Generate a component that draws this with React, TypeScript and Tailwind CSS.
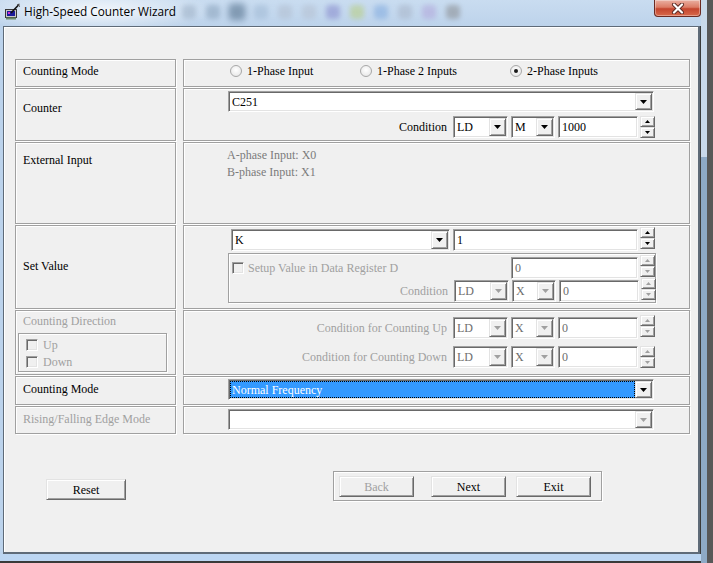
import React from "react";

const sunken =
  "border border-t-[#a0a0a0] border-l-[#a0a0a0] border-r-white border-b-white shadow-[inset_1px_1px_0_#696969,inset_-1px_-1px_0_#e3e3e3]";
const raised =
  "bg-[#f0f0f0] border border-t-[#e3e3e3] border-l-[#e3e3e3] border-r-[#696969] border-b-[#696969] shadow-[inset_1px_1px_0_#fff,inset_-1px_-1px_0_#a0a0a0]";
const etched = "border border-[#a0a0a0] shadow-[inset_1px_1px_0_#fff,1px_1px_0_#fff]";

function Tri({ up, off, small }: { up?: boolean; off?: boolean; small?: boolean }) {
  const w = small ? 5 : 7;
  const h = small ? 3 : 4;
  return (
    <svg width={w} height={h} viewBox={`0 0 ${w} ${h}`} className="block">
      <path d={up ? `M${w / 2} 0L${w} ${h}H0Z` : `M0 0H${w}L${w / 2} ${h}Z`} fill={off ? "#a0a0a0" : "#000"} />
    </svg>
  );
}

function Combo({ className, text, off, sel }: { className: string; text?: string; off?: boolean; sel?: boolean }) {
  return (
    <div className={`${sunken} bg-white flex p-[1px] ${className}`}>
      {sel ? (
        <div className="flex-1 flex items-center bg-[#3399ff] text-white border border-dotted border-black pl-[1px]">
          {text}
        </div>
      ) : (
        <div className={`flex-1 flex items-center pl-[2px] ${off ? "text-[#6d6d6d]" : "text-black"}`}>{text}</div>
      )}
      <div className={`${raised} w-[17px] flex items-center justify-center`}>
        <Tri off={off} />
      </div>
    </div>
  );
}

function Field({ className, text, off }: { className: string; text: string; off?: boolean }) {
  return (
    <div className={`${sunken} bg-white flex items-center pl-[3px] ${off ? "text-[#6d6d6d]" : "text-black"} ${className}`}>
      {text}
    </div>
  );
}

function Spin({ off, lift }: { off?: boolean; lift?: boolean }) {
  return (
    <div className={`w-[15px] h-[22px] ml-[2px] flex flex-col ${lift ? "self-start -mt-[2px]" : ""}`}>
      <div className={`${raised} h-[11px] flex items-center justify-center`}>
        <Tri up small off={off} />
      </div>
      <div className={`${raised} h-[11px] flex items-center justify-center`}>
        <Tri small off={off} />
      </div>
    </div>
  );
}

function Check() {
  return <div className={`${sunken} w-[12px] h-[12px] bg-[#f0f0f0] shrink-0`} />;
}

function Radio({ on }: { on?: boolean }) {
  return (
    <div className="w-[12px] h-[12px] rounded-full border border-[#a8a8a8] bg-[radial-gradient(circle_at_50%_40%,#ffffff,#e2e2e2)] flex items-center justify-center shrink-0">
      {on && <div className="w-[4px] h-[4px] rounded-full bg-[#1a1a1a]" />}
    </div>
  );
}

function Btn({ className, children, off }: { className: string; children: React.ReactNode; off?: boolean }) {
  return (
    <div className={`${raised} h-[21px] flex items-center justify-center ${off ? "text-[#a0a0a0]" : "text-black"} ${className}`}>
      {children}
    </div>
  );
}

function CondRow({ label, b, off, lift, dark }: { label: string; b: string; off?: boolean; lift?: boolean; dark?: boolean }) {
  return (
    <div className="w-[427px] h-[22px] flex items-center justify-end">
      <span className={`mr-[6px] ${dark ? "text-black" : "text-[#a0a0a0]"}`}>{label}</span>
      <Combo off={off} className="w-[55px] h-[22px]" text="LD" />
      <Combo off={off} className="w-[44px] h-[22px] ml-[3px]" text={b} />
      <Field off={off} className="w-[80px] h-[22px] ml-[3px]" text={dark ? "1000" : "0"} />
      <Spin off={off} lift={lift} />
    </div>
  );
}

function AppIcon() {
  return (
    <svg width="17" height="17" viewBox="0 0 17 17" className="shrink-0">
      <rect x="1.5" y="6.5" width="11" height="8" fill="#c8c8c8" stroke="#3a3a3a" />
      <rect x="3" y="8" width="8" height="5" fill="#1c1c9a" />
      <rect x="4" y="9" width="2" height="2" fill="#d02cd0" />
      <rect x="2" y="14.5" width="10" height="2" fill="#6a8a6a" />
      <path d="M7 10L15 1.5" stroke="#111" strokeWidth="1.6" />
      <path d="M13 1L16 4M15 0.5V3" stroke="#555" strokeWidth="0.8" />
    </svg>
  );
}

const blurDots = [
  "#9fb2c8",
  "#8ea6bf",
  "#58748f",
  "#a3bcd6",
  "#b3c0d2",
  "#b6c2d3",
  "#8b8fcf",
  "#b9cf87",
  "#86aee0",
  "#aab7cb",
  "#b2a9dc",
  "#8d9196",
];

function TitleBar() {
  return (
    <div className="h-[26px] flex items-start bg-[radial-gradient(ellipse_120px_22px_at_95px_11px,rgba(255,255,255,0.8),rgba(255,255,255,0)),linear-gradient(180deg,#c9dcf0_0%,#bdd3eb_100%)]">
      <div className="h-[22px] flex items-center pl-[4px]">
        <AppIcon />
        <span className="ml-[3px] font-['Open_Sans','Noto_Sans',sans-serif] text-[11.8px] leading-[14px] text-black">
          High-Speed Counter Wizard
        </span>
      </div>
      <div className="ml-[6px] mt-[5px] flex gap-[10px] blur-[2.5px] opacity-60">
        {blurDots.map((c, i) => (
          <div
            key={i}
            className={`w-[14px] h-[14px] rounded-[4px] ${i === 2 ? "outline-[4px] outline outline-[#98afc8]" : ""}`}
            style={{ backgroundColor: c }}
          />
        ))}
      </div>
      <div className="ml-auto w-[47px] h-[17px] rounded-b-[4px] border border-t-0 border-[#6b2a22] bg-[linear-gradient(180deg,#eab0a2_0%,#dc7c66_45%,#c4452e_55%,#d8694b_100%)] shadow-[inset_0_0_0_1px_rgba(255,255,255,0.35)] flex items-center justify-center">
        <svg width="14" height="11" viewBox="0 0 14 11">
          <path d="M3 1.5L11 9.5M11 1.5L3 9.5" stroke="#5a2a24" strokeWidth="4" strokeLinecap="round" />
          <path d="M3 1.5L11 9.5M11 1.5L3 9.5" stroke="#fff" strokeWidth="2.2" strokeLinecap="round" />
        </svg>
      </div>
    </div>
  );
}

export default function App() {
  return (
    <div className="w-[713px] h-[563px] overflow-hidden flex font-['Liberation_Serif','Times_New_Roman',serif] text-[12px] leading-[14px] text-black">
      <div className="w-[701px] flex flex-col bg-[#c1d7ee]">
        <TitleBar />
        <div className="flex h-[528px]">
          <div className="w-[3px] bg-[#bcd3ec]" />
          <div className="w-[697px] h-full bg-[#f0f0f0] border-t border-l border-r-2 border-b-2 border-[#5f6b78] shadow-[inset_1px_1px_0_#fff] pl-[11px] pt-[32px] flex flex-col">
            <div className="grid grid-cols-[161px_507px] grid-rows-[28px_53px_82px_84px_65px_29px_28px] gap-x-[7px] gap-y-[1px]">
              {/* Counting mode */}
              <div className={`${etched} pl-[7px] pt-[4px]`}>Counting Mode</div>
              <div className={`${etched} pl-[46px] pt-[4px]`}>
                <div className="flex items-center h-[14px]">
                  <div className="w-[130px] flex items-center gap-[5px]">
                    <Radio />
                    <span>1-Phase Input</span>
                  </div>
                  <div className="w-[150px] flex items-center gap-[5px]">
                    <Radio />
                    <span>1-Phase 2 Inputs</span>
                  </div>
                  <div className="flex items-center gap-[5px]">
                    <Radio on />
                    <span>2-Phase Inputs</span>
                  </div>
                </div>
              </div>

              {/* Counter */}
              <div className={`${etched} pl-[7px] pt-[12px]`}>Counter</div>
              <div className={`${etched} pl-[44px] pt-[2px] flex flex-col`}>
                <Combo className="w-[426px] h-[21px]" text="C251" />
                <div className="mt-[4px]">
                  <CondRow label="Condition" b="M" dark />
                </div>
              </div>

              {/* External input */}
              <div className={`${etched} pl-[7px] pt-[10px]`}>External Input</div>
              <div className={`${etched} pl-[43px] pt-[4px] leading-[17px] text-[#7b7b7b]`}>
                <div>A-phase Input: X0</div>
                <div>B-phase Input: X1</div>
              </div>

              {/* Set value */}
              <div className={`${etched} pl-[7px] pt-[33px]`}>Set Value</div>
              <div className={`${etched} pl-[44px] pt-[3px] flex flex-col`}>
                <div className="w-[427px] h-[22px] flex items-center pl-[3px]">
                  <Combo className="w-[219px] h-[22px]" text="K" />
                  <Field className="w-[185px] h-[22px] ml-[3px]" text="1" />
                  <Spin lift />
                </div>
                <div className={`${etched} w-[428px] h-[50px] mt-[2px] pt-[3px] pl-[3px] flex flex-col gap-[1px]`}>
                  <div className="h-[22px] flex items-center">
                    <Check />
                    <span className="ml-[4px] text-[#a0a0a0]">Setup Value in Data Register D</span>
                    <Field off className="ml-auto w-[127px] h-[22px]" text="0" />
                    <Spin off lift />
                  </div>
                  <div className="-ml-[3px]">
                    <CondRow label="Condition" b="X" off lift />
                  </div>
                </div>
              </div>

              {/* Counting direction */}
              <div className={`${etched} pl-[2px] pt-[3px] flex flex-col`}>
                <span className="pl-[5px] text-[#a0a0a0]">Counting Direction</span>
                <div className={`${etched} w-[149px] h-[39px] mt-[5px] pl-[7px] pt-[2px] flex flex-col text-[#a0a0a0]`}>
                  <div className="h-[17px] flex items-center gap-[5px]">
                    <Check />
                    <span>Up</span>
                  </div>
                  <div className="h-[17px] flex items-center gap-[5px]">
                    <Check />
                    <span>Down</span>
                  </div>
                </div>
              </div>
              <div className={`${etched} pl-[44px] pt-[6px] flex flex-col gap-[7px]`}>
                <CondRow label="Condition for Counting Up" b="X" off lift />
                <CondRow label="Condition for Counting Down" b="X" off />
              </div>

              {/* Counting mode select */}
              <div className={`${etched} pl-[7px] pt-[5px]`}>Counting Mode</div>
              <div className={`${etched} pl-[44px] pt-[2px]`}>
                <Combo sel className="w-[426px] h-[21px]" text="Normal Frequency" />
              </div>

              {/* Edge mode */}
              <div className={`${etched} pl-[7px] pt-[5px] text-[#a0a0a0]`}>Rising/Falling Edge Mode</div>
              <div className={`${etched} pl-[44px] pt-[2px]`}>
                <Combo off className="w-[426px] h-[21px]" text="" />
              </div>
            </div>

            <div className="flex items-start mt-[37px]">
              <Btn className="w-[80px] ml-[31px] mt-[8px]">Reset</Btn>
              <div className={`${etched} w-[269px] h-[30px] ml-[207px] pl-[5px] pt-[4px] flex items-start`}>
                <Btn off className="w-[75px]">
                  Back
                </Btn>
                <Btn className="w-[75px] ml-[17px]">Next</Btn>
                <Btn className="w-[75px] ml-[10px]">Exit</Btn>
              </div>
            </div>
          </div>
          <div className="w-[1px] bg-[#3b3b3b]" />
        </div>
        <div className="h-[7px] bg-[#bcd6f2]" />
        <div className="h-[2px] bg-[#3a3a3a]" />
      </div>
      <div className="w-[6px] bg-[linear-gradient(180deg,#c9d9ea_0px,#c9d9ea_157px,#8eaac6_157px)]" />
      <div className="w-[6px] bg-[#585858]" />
    </div>
  );
}
